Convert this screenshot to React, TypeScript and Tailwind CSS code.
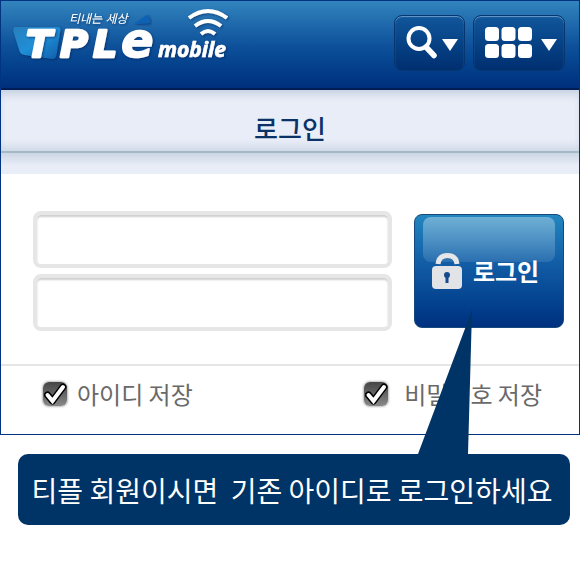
import { useState } from "react";

function Logo() {
  return (
    <svg width="240" height="80" viewBox="0 0 240 80" role="img" aria-label="TPLE mobile">
      <defs>
        <linearGradient id="plate" x1="0" y1="0" x2="1" y2="1">
          <stop offset="0" stopColor="#2a7fbd" />
          <stop offset="0.5" stopColor="#1f8fd6" />
          <stop offset="1" stopColor="#0d5ba8" />
        </linearGradient>
        <filter id="soft" x="-10%" y="-10%" width="120%" height="130%">
          <feDropShadow dx="1" dy="1" stdDeviation="0.8" floodColor="#001f52" floodOpacity="0.6" />
        </filter>
      </defs>
      <path
        d="M15 26h41q4 0 3.500 3l-4 25q-.6 4-4 4l-28-4q-4-.6-5-4l-6-19q-.8-5 2.500-5z"
        fill="url(#plate)"
        filter="url(#soft)"
      />
      <path d="M133 23l12-8.500q2-1 2.500.6l1.700 5.400q.3 1.600-1.500 1.700z" fill="#0f62b4" filter="url(#soft)" />
      <g
        filter="url(#soft)"
        fill="#fff"
        stroke="#fff"
        strokeLinejoin="round"
        fontStyle="italic"
        fontWeight="700"
        fontFamily='"DejaVu Sans", sans-serif'
      >
        <text x="25" y="56" fontSize="38" strokeWidth="2.500">T</text>
        <text x="59" y="56" fontSize="38" strokeWidth="2.500">P</text>
        <text x="92" y="56" fontSize="38" strokeWidth="2.500">L</text>
        <text x="120" y="56" fontSize="48" strokeWidth="1.500">e</text>
      </g>
      <text
        x="157"
        y="56"
        fontSize="21"
        fontWeight="700"
        fontStyle="italic"
        fontFamily='"Open Sans", sans-serif'
        fill="#fff"
        stroke="#fff"
        strokeWidth="0.6"
        filter="url(#soft)"
      >
        mobile
      </text>
      <text
        x="68"
        y="22"
        fontSize="12"
        fontStyle="italic"
        fontFamily='"Liberation Sans", "Noto Sans CJK KR", sans-serif'
        fill="#fff"
        filter="url(#soft)"
      >
        티내는 세상
      </text>
      <g fill="none" stroke="#fff" strokeWidth="4" filter="url(#soft)">
        <path d="M188 17q19-14 38 0" />
        <path d="M194 25q13-10 26 0" />
        <path d="M200 33q7-6 14 0" />
      </g>
    </svg>
  );
}

function Header() {
  const button =
    "flex h-14 items-center justify-center gap-1 rounded-lg border border-[#06366f] bg-gradient-to-b from-[#11569b] to-[#012f70] pl-1 shadow-[inset_0_1px_1px_#6b9cca]";

  return (
    <header className="flex h-[89px] items-start justify-between border-b-2 border-[#001e55] bg-gradient-to-b from-[#3284be] via-[#0e529b] via-50% to-[#002f7d] pr-3.5">
      <a href="#home">
        <Logo />
      </a>
      <div className="flex gap-2 pt-3.5">
        <button aria-label="검색" className={`${button} w-[71px]`}>
          <svg width="32" height="34" viewBox="0 0 32 34" fill="none" stroke="#fff">
            <circle cx="13" cy="12.500" r="10.500" strokeWidth="4" />
            <path d="M20 21l8 8.500" strokeWidth="5.500" strokeLinecap="round" />
          </svg>
          <Arrow />
        </button>
        <button aria-label="메뉴" className={`${button} w-[92px]`}>
          <svg width="48" height="32" viewBox="0 0 48 32" fill="#fff">
            {[0, 16.5, 33].map((x) => (
              <g key={x}>
                <rect x={x} y="0" width="14" height="14" rx="3.500" />
                <rect x={x} y="17" width="14" height="14" rx="3.500" />
              </g>
            ))}
          </svg>
          <span className="pl-1">
            <Arrow />
          </span>
        </button>
      </div>
    </header>
  );
}

function Arrow() {
  return (
    <svg width="16" height="12" viewBox="0 0 16 12" fill="#fff" className="mt-1">
      <path d="M0 0h16L8 12z" />
    </svg>
  );
}

function SaveOption({ id, label, className }: { id: string; label: string; className: string }) {
  const [checked, setChecked] = useState(true);

  return (
    <div className={`flex items-center ${className}`}>
      <span className="relative flex">
        <input
          id={id}
          type="checkbox"
          checked={checked}
          onChange={(e) => setChecked(e.target.checked)}
          className="size-6 appearance-none rounded-md bg-gradient-to-b from-[#454545] to-[#898989] shadow-[0_0_2px_1px_#bbb]"
        />
        {checked && (
          <svg width="24" height="24" viewBox="0 0 24 24" fill="none" className="pointer-events-none absolute inset-0">
            <path d="M4.500 13l5 6L20 5" stroke="#000" strokeWidth="7" strokeLinejoin="round" strokeLinecap="round" />
            <path d="M4.500 13l5 6L20 5" stroke="#fff" strokeWidth="4" strokeLinecap="round" />
          </svg>
        )}
      </span>
      <label htmlFor={id} className="text-2xl text-[#696969]">
        {label}
      </label>
    </div>
  );
}

function LoginButton() {
  return (
    <button
      type="submit"
      className="relative flex h-[114px] w-[150px] items-center justify-center gap-2.5 rounded-lg border border-[#174a7c] bg-gradient-to-b from-[#2386bf] via-[#125ba5] via-45% to-[#003180] pr-2 text-2xl font-bold text-white"
    >
      <span className="absolute inset-x-2 top-0.5 h-[45px] rounded-lg bg-gradient-to-b from-white/35 to-white/10" />
      <svg width="32" height="38" viewBox="0 0 32 38" className="relative">
        <path d="M7 12q1-8.500 9.500-8.500T26 12" fill="none" stroke="#e6e6e8" strokeWidth="5" />
        <rect x="1" y="14" width="30" height="23" rx="4" fill="#e2e3e6" />
        <circle cx="16" cy="23" r="3" fill="#174b8d" />
        <path d="M14.500 23h3v8h-3z" fill="#174b8d" />
      </svg>
      <span className="relative">로그인</span>
    </button>
  );
}

export default function App() {
  const field =
    "h-[57px] w-full rounded-lg border-4 border-[#e6e6e6] bg-white px-3 text-xl shadow-[inset_0_2px_2px_#cfcfcf] outline-none";

  return (
    <main className="bg-white font-['Noto_Sans_CJK_KR',sans-serif]">
      <div className="border border-[#003380]">
        <Header />
        <h1 className="flex h-[63px] items-center justify-center border-b-2 border-[#a5b8c8] bg-[#e9edf8] pt-3.5 text-[26px] font-medium text-[#0b3267] shadow-[inset_0_8px_8px_-4px_#c4cfdf,inset_0_-8px_8px_-4px_#cbd7e3]">
          로그인
        </h1>
        <div className="h-[21px] bg-gradient-to-b from-[#cbd7e3] to-[#e9edf8] to-60%" />
        <form onSubmit={(e) => e.preventDefault()}>
          <div className="flex items-center gap-[22px] pt-[37px] pr-[15px] pb-[33px] pl-8">
            <div className="flex flex-1 flex-col gap-1.5">
              <input aria-label="아이디" className={field} />
              <input aria-label="비밀번호" type="password" className={field} />
            </div>
            <LoginButton />
          </div>
          <div className="flex h-[70px] items-start justify-between border-t-2 border-[#e6e6e6] pt-3 pr-[37px] pl-[42px]">
            <SaveOption id="save-id" label="아이디 저장" className="gap-2.5" />
            <SaveOption id="save-password" label="비밀번호 저장" className="gap-4" />
          </div>
        </form>
      </div>

      <div className="relative mt-[19px] mr-2.5 ml-[18px] flex h-[71px] items-center justify-center rounded-[10px] bg-[#003366] pr-1 text-[28px] whitespace-pre text-white">
        <svg width="54" height="144" viewBox="0 0 54 144" className="pointer-events-none absolute right-[98px] bottom-full" fill="#003366">
          <path d="M54 0L50 144H0z" />
        </svg>
        티플 회원이시면  기존 아이디로 로그인하세요
      </div>
    </main>
  );
}
